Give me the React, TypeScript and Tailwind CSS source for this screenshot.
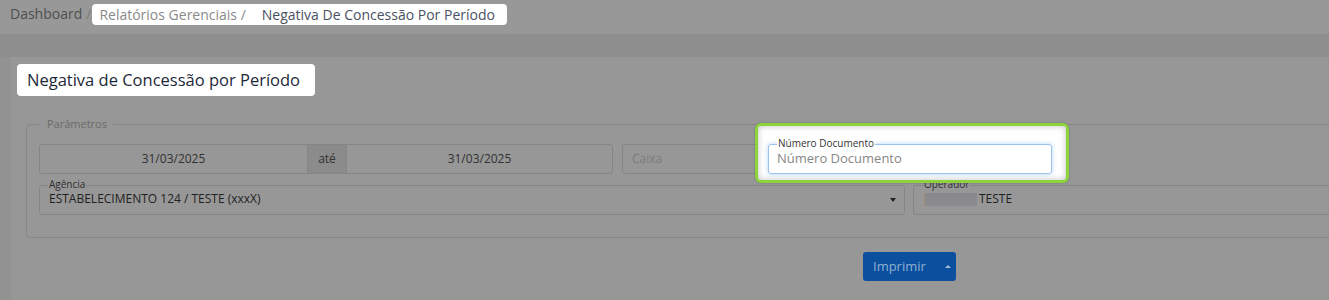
import React from "react";

export default function App() {
  return (
    <div className="h-[300px] w-[1329px] overflow-hidden bg-[#929292] font-['Open_Sans',sans-serif]">
      {/* breadcrumb */}
      <div className="flex h-[35px] items-start border-b border-[#8a8a8a] bg-[#989898] pl-[10px] pt-[4px] text-[14px] leading-[20px]">
        <span className="text-[#4f4f4f]">Dashboard</span>
        <span className="ml-[4px] text-[#7b7b7b]">/</span>
        <div className="ml-[1px] flex h-[21px] items-center rounded-[4px] bg-white pl-[7px] pr-[12px]">
          <span className="text-[#8a8a8a]">Relatórios Gerenciais /</span>
          <span className="ml-[16px] text-[#4a5163]">Negativa De Concessão Por Período</span>
        </div>
      </div>
      <div className="h-[22px] bg-[#8e8e8f]" />

      <div className="flex pl-[11px]">
        <div className="h-[243px] w-[1797px] shrink-0 bg-[#979797] pt-[7px]">
          <div className="ml-[6px] flex h-[32px] w-fit items-center rounded-[4px] bg-white pl-[10px] pr-[15px] text-[16.5px] text-[#1d2939]">
            Negativa de Concessão por Período
          </div>

          <fieldset className="ml-[15px] mr-[15px] mt-[21px] rounded-[4px] border border-[#878787] pb-[22px] pl-[12px] pt-[13px]">
            <legend className="ml-[2px] px-[6px] text-[11px] leading-[14px] text-[#6b6b6b]">Parâmetros</legend>

            {/* row 1 */}
            <div className="flex h-[30px]">
              <div className="flex w-[574px] text-[12px] text-[#323232]">
                <div className="flex flex-1 items-center justify-center rounded-l-[3px] border border-[#858585]">31/03/2025</div>
                <div className="flex w-[38px] items-center justify-center border-y border-[#858585] bg-[#8b8b8b]">até</div>
                <div className="flex w-[267px] items-center justify-center rounded-r-[3px] border border-[#858585]">31/03/2025</div>
              </div>
              <div className="ml-[9px] flex w-[137px] items-center rounded-[3px] border border-[#858585] pl-[9px] text-[12px] text-[#7a7a7a]">
                Caixa
              </div>
              <div className="relative z-10 ml-[9px] w-[284px]">
                <div className="absolute left-[-13px] top-[-21px] h-[60px] w-[314px] rounded-[6px] border-[3px] border-[#8ed33d] bg-white shadow-[inset_0_0_6px_rgba(0,0,0,0.25),0_0_2px_rgba(0,0,0,0.3)]" />
                <div className="relative flex h-[30px] items-center rounded-[3px] border border-[#9cc3ee] bg-white pl-[8px] text-[13px] text-[#878787] shadow-[0_0_4px_rgba(102,175,233,0.5)]">
                  Número Documento
                  <span className="absolute left-[8px] top-[-8px] bg-white px-[1px] text-[10px] leading-[12px] text-[#333]">Número Documento</span>
                </div>
              </div>
            </div>

            {/* row 2 */}
            <div className="mt-[11px] flex h-[30px]">
              <div className="relative flex w-[866px] items-center rounded-[3px] border border-[#858585] pb-[2px] pl-[9px] text-[12px] text-[#1f1f1f]">
                <span className="absolute left-[8px] top-[-8px] bg-[#979797] px-[1px] text-[10px] leading-[12px] text-[#2e2e2e]">Agência</span>
                ESTABELECIMENTO 124 / TESTE (xxxX)
                <span className="absolute right-[8px] top-[12px] h-0 w-0 border-x-[3.5px] border-t-[4px] border-x-transparent border-t-[#222]" />
              </div>
              <div className="relative ml-[8px] flex w-[600px] items-center rounded-[3px] border border-[#858585] pb-[2px] pl-[10px] text-[12px] text-[#1f1f1f]">
                <span className="absolute left-[9px] top-[-8px] bg-[#979797] px-[1px] text-[10px] leading-[12px] text-[#2e2e2e]">Operador</span>
                <span className="mr-[2px] h-[13px] w-[53px] border-l border-[#a88a6a] bg-[#8a8a8c] blur-[0.5px]" />
                TESTE
              </div>
            </div>
          </fieldset>

          <div className="ml-[852px] mt-[14px] flex h-[29px] w-[93px] items-center rounded-[3px] bg-[#0b4f9f] text-[13px] text-[#8fb1d1]">
            <span className="pl-[10px]">Imprimir</span>
            <span className="ml-[19px] h-0 w-0 border-x-[3px] border-b-[3px] border-x-transparent border-b-[#a6bdd4]" />
          </div>
        </div>
      </div>
    </div>
  );
}
